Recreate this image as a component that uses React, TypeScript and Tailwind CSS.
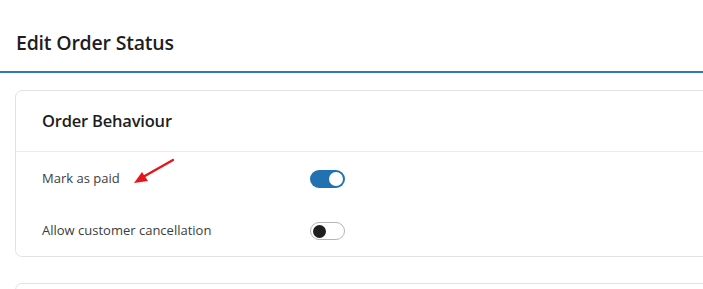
import React from "react";

function Toggle({ on }: { on: boolean }) {
  if (on) {
    return (
      <div className="flex h-[18px] w-[35px] items-center justify-end rounded-full bg-[#2271b1] pr-[2px]">
        <div className="h-[14px] w-[14px] rounded-full bg-white" />
      </div>
    );
  }
  return (
    <div className="flex h-[18px] w-[35px] items-center justify-start rounded-full border border-[#b5b5b5] bg-white pl-[2px]">
      <div className="h-[13px] w-[13px] rounded-full bg-[#1e1e1e]" />
    </div>
  );
}

export default function App() {
  return (
    <div className="h-[289px] w-[703px] overflow-hidden bg-white text-[#1e1e1e]" style={{ fontFamily: '"Open Sans", "Noto Sans", sans-serif' }}>
      <div className="flex h-[73px] items-center border-b-2 border-[#2c78bb] pl-[16px] pt-[14px]">
        <h1 className="text-[19.5px] font-semibold tracking-[-0.2px] text-[#1e1e1e]">Edit Order Status</h1>
      </div>
      <div className="flex flex-col gap-[26px] pl-[15px] pt-[17px]">
        <div className="-mr-4 rounded-[7px] border border-[#e2e2e2] bg-white">
          <div className="flex h-[61px] items-center border-b border-[#ececec] pl-[26px]">
            <h2 className="text-[16.5px] font-semibold tracking-[-0.2px] text-[#1e1e1e]">Order Behaviour</h2>
          </div>
          <div className="relative flex h-[54px] items-center pl-[26px]">
            <span className="w-[268px] text-[13px] text-[#3c3c3c]">Mark as paid</span>
            <Toggle on />
            <svg className="absolute left-[113px] top-[3px]" width="50" height="30" viewBox="0 0 50 30">
              <line x1="44" y1="5" x2="14" y2="22" stroke="#e8141b" strokeWidth="2.4" strokeLinecap="round" />
              <polygon points="5,28 13,17 19,26" fill="#e8141b" />
            </svg>
          </div>
          <div className="flex h-[50px] items-center pl-[26px]">
            <span className="w-[268px] text-[13px] text-[#3c3c3c]">Allow customer cancellation</span>
            <Toggle on={false} />
          </div>
        </div>
        <div className="-mr-4 h-[60px] rounded-[7px] border border-[#e2e2e2] bg-white" />
      </div>
    </div>
  );
}
